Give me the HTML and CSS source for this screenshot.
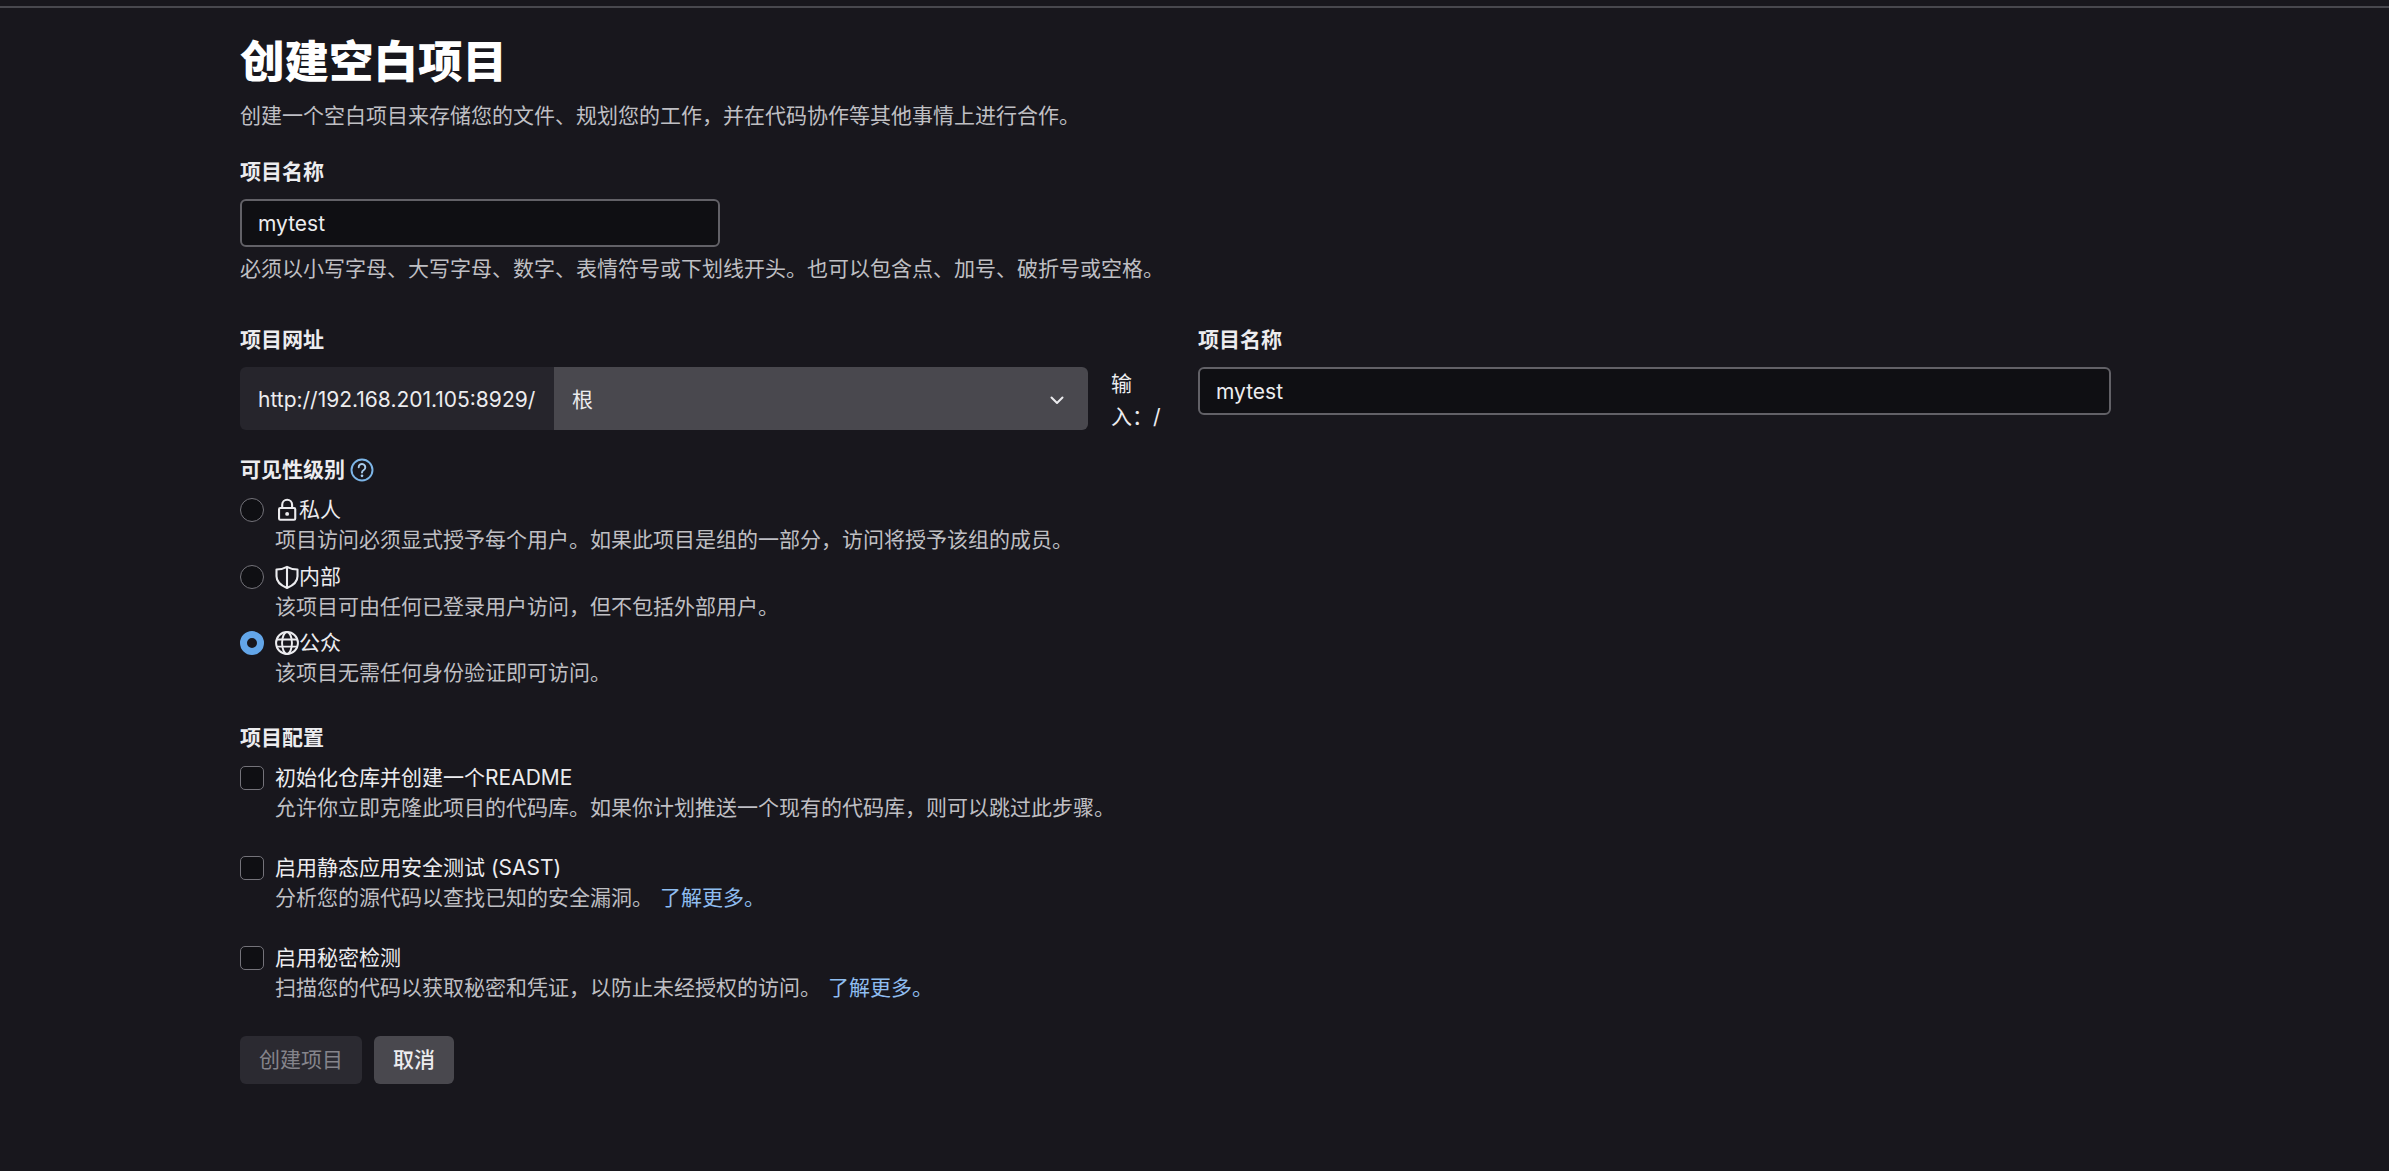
FILE: index.html
```html
<!DOCTYPE html>
<html lang="zh-CN">
<head>
<meta charset="utf-8">
<title>创建空白项目</title>
<link rel="stylesheet" href="styles.css">
</head>
<body>
<div class="topline"></div>
<main class="page">
  <h1 class="title">创建空白项目</h1>
  <p class="lead">创建一个空白项目来存储您的文件、规划您的工作，并在代码协作等其他事情上进行合作。</p>

  <label class="label name-label">项目名称</label>
  <input class="text-input name-input" value="mytest">
  <p class="hint">必须以小写字母、大写字母、数字、表情符号或下划线开头。也可以包含点、加号、破折号或空格。</p>

  <div class="url-row">
    <div class="url-col">
      <label class="label">项目网址</label>
      <div class="url-group">
        <span class="url-prefix">http://192.168.201.105:8929/</span>
        <div class="url-select">
          <span>根</span>
          <svg class="chevron" viewBox="0 0 16 16" width="16" height="16"><path d="M2.500 5.500L8 11l5.500-5.500" fill="none" stroke="#ececef" stroke-width="2" stroke-linecap="round" stroke-linejoin="round"/></svg>
        </div>
      </div>
    </div>
    <div class="slash">输入：/</div>
    <div class="slug-col">
      <label class="label">项目名称</label>
      <input class="text-input" value="mytest">
    </div>
  </div>

  <div class="label vis-label">可见性级别
    <svg class="help" viewBox="0 0 16 16" width="24" height="24"><circle cx="8" cy="8" r="7" fill="none" stroke="#7db6e8" stroke-width="1.300"/><path d="M5.800 6.200a2.200 2.200 0 1 1 3.400 1.800c-.8.500-1.200.9-1.200 1.700" fill="none" stroke="#a9cdee" stroke-width="1.300" stroke-linecap="round"/><circle cx="8" cy="11.900" r=".9" fill="#a9cdee"/></svg>
  </div>

  <div class="option vis-option">
    <input class="radio" type="radio" name="vis">
    <div class="option-body">
      <div class="option-title"><svg class="vis-icon" viewBox="0 0 16 16" width="24" height="24"><rect x="2.700" y="6.700" width="10.800" height="7.800" rx=".8" fill="none" stroke="#ececef" stroke-width="1.400"/><path d="M4.800 6.700V4.500a3.300 3.300 0 0 1 6.600 0v2.200" fill="none" stroke="#ececef" stroke-width="1.400"/><circle cx="8.100" cy="10.600" r="1.300" fill="#ececef"/></svg>私人</div>
      <div class="option-desc">项目访问必须显式授予每个用户。如果此项目是组的一部分，访问将授予该组的成员。</div>
    </div>
  </div>
  <div class="option vis-option">
    <input class="radio" type="radio" name="vis">
    <div class="option-body">
      <div class="option-title"><svg class="vis-icon" viewBox="0 0 16 16" width="24" height="24"><path d="M8 1.200C10 2.300 12.500 3 15 3v4.500c0 3.700-3 6.200-7 7.800-4-1.600-7-4.100-7-7.800V3C3.500 3 6 2.300 8 1.200zM8 1.200v14" fill="none" stroke="#ececef" stroke-width="1.400" stroke-linejoin="round"/></svg>内部</div>
      <div class="option-desc">该项目可由任何已登录用户访问，但不包括外部用户。</div>
    </div>
  </div>
  <div class="option vis-option">
    <input class="radio" type="radio" name="vis" checked>
    <div class="option-body">
      <div class="option-title"><svg class="vis-icon" viewBox="0 0 16 16" width="24" height="24"><g fill="none" stroke="#ececef" stroke-width="1.300"><circle cx="8" cy="8" r="7.300"/><ellipse cx="8" cy="8" rx="3.300" ry="7.300"/><path d="M1 5.600h14M1 10.400h14"/></g></svg>公众</div>
      <div class="option-desc">该项目无需任何身份验证即可访问。</div>
    </div>
  </div>

  <div class="label cfg-label">项目配置</div>
  <div class="option cfg-option">
    <input class="check" type="checkbox">
    <div class="option-body">
      <div class="option-title">初始化仓库并创建一个README</div>
      <div class="option-desc">允许你立即克隆此项目的代码库。如果你计划推送一个现有的代码库，则可以跳过此步骤。</div>
    </div>
  </div>
  <div class="option cfg-option">
    <input class="check" type="checkbox">
    <div class="option-body">
      <div class="option-title">启用静态应用安全测试 (SAST)</div>
      <div class="option-desc">分析您的源代码以查找已知的安全漏洞。 <a class="link" href="#">了解更多。</a></div>
    </div>
  </div>
  <div class="option cfg-option">
    <input class="check" type="checkbox">
    <div class="option-body">
      <div class="option-title">启用秘密检测</div>
      <div class="option-desc">扫描您的代码以获取秘密和凭证，以防止未经授权的访问。 <a class="link" href="#">了解更多。</a></div>
    </div>
  </div>

  <div class="actions">
    <button class="btn btn-disabled" type="button">创建项目</button>
    <button class="btn btn-cancel" type="button">取消</button>
  </div>
</main>
</body>
</html>
```
FILE: styles.css
```css
* { box-sizing: border-box; }
html, body { margin: 0; height: 100%; }
body {
  background: #18171d;
  color: #ececef;
  font-family: Inter, "Noto Sans CJK SC", sans-serif;
  font-size: 21px;
  line-height: 30px;
  overflow: hidden;
}
.topline { height: 8px; border-bottom: 2px solid #48484e; }
.page { padding: 0 278px 0 240px; }
.title {
  margin: 28px 0 0;
  font-size: 44.5px;
  line-height: 52px;
  font-weight: 900;
  color: #fff;
}
.lead, .hint { margin: 0; color: #bfbfc3; }
.lead { margin-top: 13px; }
.label { display: block; font-weight: 700; color: #ececef; line-height: 30px; }
.name-label { margin-top: 26px; }
.text-input {
  display: block;
  height: 48px;
  width: 100%;
  padding: 0 16px;
  background: #0f0f13;
  border: 2px solid #626167;
  border-radius: 6px;
  color: #ececef;
  font: inherit;
  outline: none;
}
.name-input { width: 480px; margin-top: 12px; }
.hint { margin-top: 7px; }
.url-row { display: flex; margin-top: 41px; }
.url-col { width: 848px; flex: none; }
.url-group { display: flex; height: 63px; margin-top: 12px; }
.url-prefix {
  width: 314px;
  padding: 2px 0 0 18px;
  display: flex;
  align-items: center;
  background: #26252c;
  border-radius: 6px 0 0 6px;
  white-space: nowrap;
}
.url-select {
  flex: 1;
  display: flex;
  align-items: center;
  justify-content: space-between;
  padding: 2px 23px 0 18px;
  background: #49484e;
  border-radius: 0 6px 6px 0;
}
.chevron { display: block; }
.slash {
  width: 64px;
  margin: 42px 23px 0;
  flex: none;
  line-height: 33px;
}
.slug-col { flex: 1; }
.slug-col .text-input { margin-top: 12px; }
.vis-label { display: flex; align-items: center; gap: 5px; margin-top: 22px; }
.help { flex: none; }
.option { display: flex; gap: 11px; }
.vis-option { margin-top: 10px; margin-bottom: -3.500px; }
.option-body { min-width: 0; }
.option-title { display: flex; align-items: center; height: 30px; color: #ececef; }
.option-desc { color: #bfbfc3; }
.vis-icon { flex: none; }
.radio, .check {
  appearance: none;
  flex: none;
  width: 24px;
  height: 24px;
  margin: 3px 0 0;
  background: #0f0f13;
  border: 1.500px solid #74737a;
}
.radio { border-radius: 50%; }
.radio:checked { border: 7.500px solid #63a6e9; background: #18171d; }
.check { border-radius: 5px; }
.cfg-label { margin-top: 38.5px; }
.cfg-option { margin-top: 0; margin-bottom: 30px; }
.cfg-label + .cfg-option { margin-top: 10px; }
.link { color: #8fbdf0; text-decoration: none; margin-left: 1px; }
.actions { display: flex; gap: 12px; margin-top: 33px; }
.btn {
  height: 48px;
  padding: 0 19px;
  border: 0;
  border-radius: 6px;
  background: #49484e;
  color: #ececef;
  font: inherit;
}
.btn-cancel { font-weight: 500; }
.btn-disabled { background: #2b2a31; color: #85848b; }
```
